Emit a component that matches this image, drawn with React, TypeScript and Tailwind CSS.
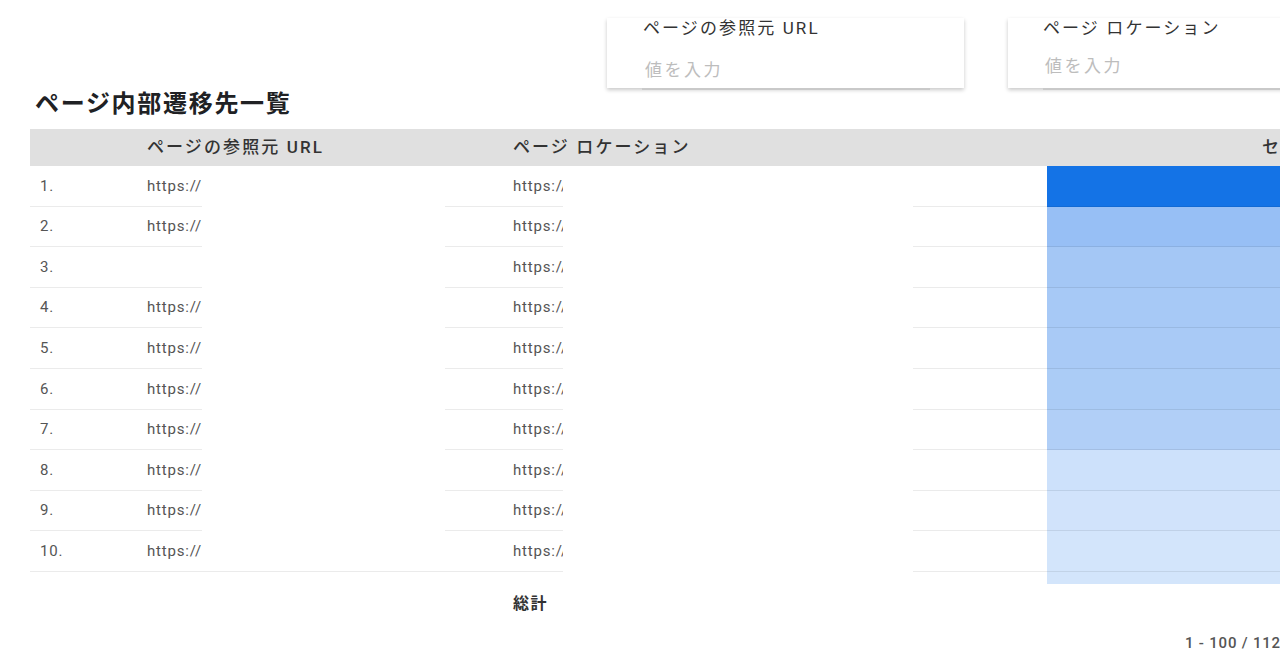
const FONT = 'font-[Roboto,"Noto_Sans_CJK_JP",sans-serif]'

type Row = {
  no: string
  ref: string
  loc: string
  color: string
  fullLine?: boolean
}

const rows: Row[] = [
  { no: '1.', ref: 'https://', loc: 'https://www', color: 'bg-[#1473e6]' },
  { no: '2.', ref: 'https://', loc: 'https://www', color: 'bg-[#97bff5]' },
  { no: '3.', ref: '', loc: 'https://www', color: 'bg-[#a4c7f5]' },
  { no: '4.', ref: 'https://', loc: 'https://www', color: 'bg-[#a7c9f6]' },
  { no: '5.', ref: 'https://', loc: 'https://www', color: 'bg-[#a9caf6]' },
  { no: '6.', ref: 'https://', loc: 'https://www', color: 'bg-[#abccf6]' },
  { no: '7.', ref: 'https://', loc: 'https://www', color: 'bg-[#b1cff7]' },
  { no: '8.', ref: 'https://', loc: 'https://www', color: 'bg-[#cde1fb]' },
  { no: '9.', ref: 'https://', loc: 'https://www', color: 'bg-[#d1e3fb]' },
  { no: '10.', ref: 'https://', loc: 'https://www', color: 'bg-[#d3e5fb]', fullLine: true },
]

const line = 'border-b border-[rgba(0,0,0,0.08)]'
const cols = 'grid grid-cols-[107px_65px_243px_58px_60px_350px_134px_300px]'

function FilterCard({
  label,
  width,
  labelPad,
  gap,
}: {
  label: string
  width: string
  labelPad: string
  gap: string
}) {
  return (
    <div className={`${width} shrink-0 flex flex-col`}>
      <div className={`h-[70px] bg-white shadow-[0_2px_4px_rgba(0,0,0,0.22)] ${labelPad} flex flex-col`}>
        <div className="h-[20px] leading-[20px] text-[17px] tracking-[2.1px] text-[#333] whitespace-nowrap">
          {label}
        </div>
        <div className={`${gap} h-[20px] leading-[20px] text-[17px] tracking-[2.5px] text-[#bdbdbd] whitespace-nowrap pl-[2px]`}>
          値を入力
        </div>
      </div>
      <div className="h-[2px] ml-[35px] mr-[34px] bg-[#c9c9c9]" />
    </div>
  )
}

export default function App() {
  return (
    <div className={`w-[1280px] h-[670px] overflow-hidden bg-white ${FONT}`}>
      <div className="flex pl-[607px] pt-[18px] gap-[44px] h-[90px]">
        <FilterCard label="ページの参照元 URL" width="w-[357px]" labelPad="pl-[36px]" gap="mt-[22px]" />
        <FilterCard label="ページ ロケーション" width="w-[320px]" labelPad="pl-[35px]" gap="mt-[18px]" />
      </div>

      <h2 className="pl-[35px] h-[28px] leading-[28px] text-[24px] font-bold tracking-[1.7px] text-[#202124]">
        ページ内部遷移先一覧
      </h2>

      <div className="mt-[11px] ml-[30px]">
        <div className="grid grid-cols-[107px_366px_544px_300px] h-[37px] bg-[#e0e0e0] text-[17px] font-medium tracking-[2.1px] text-[#333]">
          <div />
          <div className="flex items-center pl-[10px] whitespace-nowrap">ページの参照元 URL</div>
          <div className="flex items-center pl-[10px] whitespace-nowrap">ページ ロケーション</div>
          <div className="flex items-center pl-[215px] whitespace-nowrap">セッション</div>
        </div>

        {rows.map((r) => (
          <div key={r.no} className={`${cols} h-[40.6px] text-[15px] tracking-[0.8px] text-[#555]`}>
            <div className={`${line} flex items-center pl-[10px]`}>{r.no}</div>
            <div className={`${line} flex items-center pl-[10px] overflow-hidden whitespace-nowrap`}>{r.ref}</div>
            <div className={r.fullLine ? line : ''} />
            <div className={line} />
            <div className={`${line} flex items-center pl-[10px] overflow-hidden whitespace-nowrap`}>{r.loc}</div>
            <div />
            <div className={line} />
            <div className={`${line} ${r.color}`} />
          </div>
        ))}

        <div className={`${cols} h-[12px]`}>
          <div className="col-start-8 bg-[#d3e5fb]" />
        </div>

        <div className={`${cols} h-[40px]`}>
          <div className="col-start-5 col-span-2 flex items-center pl-[10px] text-[16px] font-bold tracking-[1.5px] text-[#333]">
            総計
          </div>
        </div>

        <div className="flex items-center h-[38px] pl-[1155px] text-[15px] font-medium tracking-[0.8px] text-[#555] whitespace-nowrap">
          1 - 100 / 112
        </div>
      </div>
    </div>
  )
}
